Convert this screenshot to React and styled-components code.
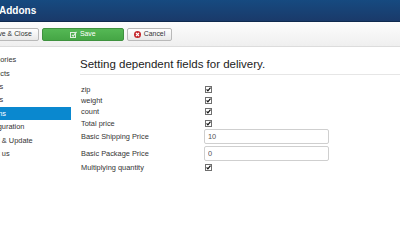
import React from "react";
import styled, { createGlobalStyle, css } from "styled-components";

const GlobalStyle = createGlobalStyle`
  html, body { margin: 0; padding: 0; background: #fff; overflow: hidden; }
  body { font-family: "Liberation Sans", Arial, sans-serif; color: #333; }
  * { box-sizing: border-box; }
  svg { display: block; }
`;

const Page = styled.div`
  width: 400px;
  height: 240px;
  overflow: hidden;
  display: flex;
  flex-direction: column;
`;

const Header = styled.header`
  height: 22px;
  flex: none;
  background: linear-gradient(#164a80, #1a3a6a);
  border-bottom: 1px solid #0f2a4f;
  display: flex;
  align-items: center;
`;

const Title = styled.h1`
  margin: 0 0 0 -1px;
  font-size: 10px;
  font-weight: bold;
  color: #fff;
  line-height: 21px;
`;

const Toolbar = styled.div`
  height: 25px;
  flex: none;
  background: linear-gradient(#fdfdfd, #efefef);
  border-bottom: 1px solid #dcdcdc;
  display: flex;
  align-items: flex-start;
  gap: 3px;
  padding-top: 6px;
`;

const Button = styled.button`
  height: 13px;
  padding: 0 6px;
  display: inline-flex;
  align-items: center;
  justify-content: center;
  gap: 3px;
  font-family: inherit;
  font-size: 6.9px;
  line-height: 1;
  color: #333;
  border: 1px solid #b9b9b9;
  border-radius: 2px;
  background: linear-gradient(#ffffff, #e8e8e8);
  white-space: nowrap;
  ${(p) =>
    p.$variant === "success" &&
    css`
      width: 82px;
      color: #fff;
      border-color: #3f923f;
      background: linear-gradient(#55b855, #45a645);
    `}
  ${(p) => p.$offset && css`margin-left: ${p.$offset}px;`}
`;

const Body = styled.div`
  flex: 1;
  display: flex;
  gap: 9px;
`;

const Sidebar = styled.nav`
  width: 71px;
  flex: none;
  overflow: hidden;
  padding-top: 6.3px;
`;

const NavList = styled.ul`
  list-style: none;
  margin: 0 0 0 -20px;
  padding: 0;
  width: 91px;
`;

const NavItem = styled.li`
  height: 13.4px;
  line-height: 13.4px;
  font-size: 7.4px;
  padding-left: 0.5px;
  white-space: nowrap;
  color: ${(p) => (p.$active ? "#fff" : "#333")};
  background: ${(p) => (p.$active ? "#0a88cf" : "transparent")};
`;

const Main = styled.main`
  flex: 1;
  padding-top: 10px;
`;

const Heading = styled.h2`
  margin: 0;
  font-size: 11.5px;
  font-weight: normal;
  line-height: 14px;
  color: #222;
  padding-bottom: 3px;
  border-bottom: 1px solid #e6e6e6;
`;

const FormTable = styled.div`
  margin-top: 9px;
  display: grid;
  grid-template-columns: 124px 125px;
`;

const Label = styled.div`
  height: ${(p) => (p.$tall ? 16.4 : 11.2)}px;
  display: flex;
  align-items: center;
  font-size: 7.4px;
  padding-left: 1px;
  color: #333;
  white-space: nowrap;
`;

const Field = styled.div`
  height: ${(p) => (p.$tall ? 16.4 : 11.2)}px;
  display: flex;
  align-items: center;
`;

const Box = styled.span`
  display: block;
  width: 7px;
  height: 7px;
  margin-left: 1px;
`;

const TextInput = styled.input`
  width: 124.5px;
  height: 15px;
  border: 1px solid #cfcfcf;
  border-radius: 2px;
  padding: 0 0 0 3px;
  font-family: inherit;
  font-size: 7.4px;
  color: #555;
  background: #fff;
  outline: none;
`;

const SaveIcon = () => (
  <svg width="7" height="7" viewBox="0 0 7 7">
    <rect x="0.5" y="1.5" width="5" height="5" fill="none" stroke="#ddeedd" strokeWidth="1" />
    <path d="M2 3.8 L3.2 5 L6.5 0.8" fill="none" stroke="#ddeedd" strokeWidth="1.2" />
  </svg>
);

const DiskIcon = () => (
  <svg width="7" height="7" viewBox="0 0 7 7">
    <rect x="0" y="0" width="7" height="7" rx="1" fill="#555" />
    <rect x="1.5" y="1" width="4" height="2" fill="#fff" />
  </svg>
);

const CancelIcon = () => (
  <svg width="7" height="7" viewBox="0 0 7 7">
    <circle cx="3.5" cy="3.5" r="3.5" fill="#c4262b" />
    <path d="M2 2 L5 5 M5 2 L2 5" stroke="#fff" strokeWidth="1.1" />
  </svg>
);

const Check = () => (
  <Box>
    <svg width="7" height="7" viewBox="0 0 7 7">
      <rect x="0.5" y="0.5" width="6" height="6" fill="#fff" stroke="#6f6f6f" strokeWidth="1" />
      <path d="M1.6 3.4 L2.9 4.9 L5.5 1.7" fill="none" stroke="#111" strokeWidth="1.2" />
    </svg>
  </Box>
);

const navItems = [
  "Categories",
  "Products",
  "Orders",
  "Clients",
  "Options",
  "Configuration",
  "Install & Update",
  "About us",
];

const rows = [
  { label: "zip", type: "check" },
  { label: "weight", type: "check" },
  { label: "count", type: "check" },
  { label: "Total price", type: "check" },
  { label: "Basic Shipping Price", type: "text", value: "10" },
  { label: "Basic Package Price", type: "text", value: "0" },
  { label: "Multiplying quantity", type: "check" },
];

export default function App() {
  return (
    <>
      <GlobalStyle />
      <Page>
        <Header>
          <Title>Addons</Title>
        </Header>
        <Toolbar>
          <Button $offset={-27}>
            <DiskIcon />
            Save &amp; Close
          </Button>
          <Button $variant="success">
            <SaveIcon />
            Save
          </Button>
          <Button>
            <CancelIcon />
            Cancel
          </Button>
        </Toolbar>
        <Body>
          <Sidebar>
            <NavList>
              {navItems.map((n) => (
                <NavItem key={n} $active={n === "Options"}>
                  {n}
                </NavItem>
              ))}
            </NavList>
          </Sidebar>
          <Main>
            <Heading>Setting dependent fields for delivery.</Heading>
            <FormTable>
              {rows.map((r) => (
                <React.Fragment key={r.label}>
                  <Label $tall={r.type === "text"}>{r.label}</Label>
                  <Field $tall={r.type === "text"}>
                    {r.type === "check" ? (
                      <Check />
                    ) : (
                      <TextInput defaultValue={r.value} />
                    )}
                  </Field>
                </React.Fragment>
              ))}
            </FormTable>
          </Main>
        </Body>
      </Page>
    </>
  );
}
